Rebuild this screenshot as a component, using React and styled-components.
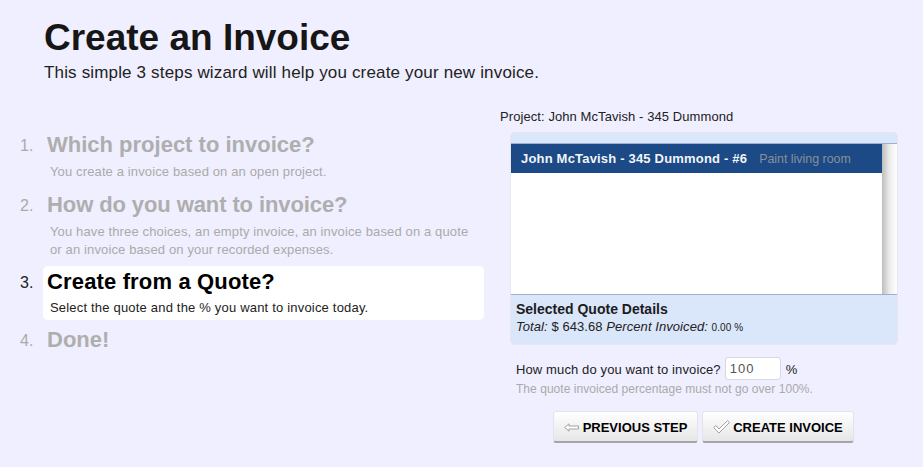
import React from "react";
import styled, { createGlobalStyle } from "styled-components";

const Global = createGlobalStyle`
  html, body { margin: 0; padding: 0; background: #f0efff; }
  body { font-family: "Liberation Sans", Arial, sans-serif; color: #222; width: 923px; height: 467px; overflow: hidden; }
`;
const Page = styled.div`
  width: 923px; height: 467px; box-sizing: border-box; overflow: hidden; background: #f0efff;
`;
const Header = styled.header`padding: 16px 0 0 44px; height: 88px; box-sizing: border-box;`;
const Title = styled.h1`margin: 0; font-size: 37px; line-height: 44px; font-weight: bold; color: #161616;`;
const Subtitle = styled.p`margin: 3px 0 0; font-size: 17px; line-height: 20px; letter-spacing: .16px; color: #222;`;
const Columns = styled.div`display: flex; height: 379px;`;
const Steps = styled.ol`list-style: none; margin: 0; padding: 42px 0 0 0; width: 500px; box-sizing: border-box;`;
const Step = styled.li`
  display: flex; align-items: flex-start; margin-bottom: ${p => p.$gap}px;
`;
const Num = styled.span`
  width: 43px; box-sizing: border-box; padding: ${p => p.$active ? 7 : 6}px 0 0 20px; font-size: 16px; line-height: 20px; flex: none;
  color: ${p => p.$active ? "#222" : "#aaa"};
`;
const StepBody = styled.div`
  width: 441px; box-sizing: border-box; padding: ${p => p.$active ? 1 : 0}px 4px 3px 4px; border-radius: 5px;
  background: ${p => p.$active ? "#fff" : "transparent"};
`;
const StepTitle = styled.h2`
  margin: 0; font-size: 22px; line-height: 30px; font-weight: bold; color: ${p => p.$active ? "#000" : "#aeaeae"};
  letter-spacing: ${p => p.$spacing || 0}px;
`;
const StepText = styled.p`
  margin: ${p => p.$active ? 2 : 3}px 0 0 3px; font-size: 13px; line-height: 18px;
  letter-spacing: ${p => p.$active ? ".19px" : ".13px"}; color: ${p => p.$active ? "#222" : "#aaa"};
`;
const Right = styled.section`width: 423px; padding-top: 20px; box-sizing: border-box;`;
const ProjectLabel = styled.div`font-size: 13px; line-height: 18px; letter-spacing: .08px; color: #222;`;
const Panel = styled.div`
  margin: 6px 0 0 10px; width: 388px; height: 213px; box-sizing: border-box; border: 1px solid #e6e6ee; border-radius: 5px;
  background: #dae6fa; overflow: hidden; display: flex; flex-direction: column;
`;
const ListBox = styled.div`
  margin-top: 10px; height: 152px; flex: none; border-top: 1px solid #9fb0cf; border-bottom: 1px solid #9fb0cf;
  background: #fff; display: flex; box-sizing: border-box;
`;
const ListInner = styled.div`flex: 1;`;
const Scroll = styled.div`
  width: 15px; flex: none; background: linear-gradient(90deg, #bdbdbd 0%, #ececec 50%, #fff 100%);
`;
const Row = styled.div`
  height: 29px; background: #1b4a86; display: flex; align-items: center; padding-left: 10px; gap: 12px; font-size: 13px;
`;
const RowName = styled.b`color: #f2f4f8; letter-spacing: .19px;`;
const RowNote = styled.span`color: #8a8f98; font-size: 12.4px;`;
const Details = styled.div`padding: 6px 5px 0; `;
const DetailsTitle = styled.div`font-size: 14px; line-height: 16px; font-weight: bold; color: #1c1c1c;`;
const DetailsLine = styled.div`margin-top: 1px; font-size: 13px; line-height: 17px; letter-spacing: .07px; color: #222; em { font-style: italic; } small { font-size: 10px; }`;
const Form = styled.div`margin: 12px 0 0 16px;`;
const AmountRow = styled.label`display: flex; align-items: center; font-size: 13px; letter-spacing: .12px; color: #222; height: 23px; padding-top: 2px; box-sizing: border-box;`;
const AmountInput = styled.input`
  width: 56px; height: 23px; box-sizing: border-box; margin: -2px 5px 0 4px; padding: 0 4px; border: 1px solid #d8d8e2; border-radius: 3px;
  background: #fff; font: 13px "Liberation Sans", Arial, sans-serif; color: #555; letter-spacing: 1px;
`;
const Hint = styled.div`margin-top: 1px; font-size: 12px; line-height: 16px; letter-spacing: .04px; color: #aaa;`;
const Buttons = styled.div`display: flex; gap: 4px; margin: 14px 0 0 37px;`;
const Button = styled.button`
  height: 32px; width: ${p => p.$w}px; box-sizing: border-box; padding: 1px 0 0; display: flex; align-items: center; justify-content: center; gap: ${p => p.$gap}px;
  border: 1px solid #e4e4e8; border-bottom: 2px solid #a5a5a8; border-radius: 3px;
  background: linear-gradient(#fff, #e6e6e6);
  font: bold 13px "Liberation Sans", Arial, sans-serif; color: #000;
`;

const ArrowIcon = () => (
  <svg width="15" height="9" viewBox="0 0 15 9" fill="#fff" stroke="#a0a0a0" strokeWidth="1">
    <path d="M.7 4.5 5 .8v2.2h9.5v3H5v2.2z" />
  </svg>
);
const CheckIcon = () => (
  <svg width="17" height="14" viewBox="0 0 17 14" fill="#fff" stroke="#a0a0a0" strokeWidth="1">
    <path d="M.7 7.5 3 5.5 6 9 14.5.7 16.5 2.5 6 13z" />
  </svg>
);

export default function App() {
  return (
    <Page>
      <Global />
      <Header>
        <Title>Create an Invoice</Title>
        <Subtitle>This simple 3 steps wizard will help you create your new invoice.</Subtitle>
      </Header>
      <Columns>
        <Steps>
          <Step $gap={6}>
            <Num>1.</Num>
            <StepBody>
              <StepTitle>Which project to invoice?</StepTitle>
              <StepText>You create a invoice based on an open project.</StepText>
            </StepBody>
          </Step>
          <Step $gap={4}>
            <Num>2.</Num>
            <StepBody>
              <StepTitle $spacing={-0.1}>How do you want to invoice?</StepTitle>
              <StepText>You have three choices, an empty invoice, an invoice based on a quote<br />or an invoice based on your recorded expenses.</StepText>
            </StepBody>
          </Step>
          <Step $gap={5}>
            <Num $active>3.</Num>
            <StepBody $active>
              <StepTitle $active $spacing={0.15}>Create from a Quote?</StepTitle>
              <StepText $active>Select the quote and the % you want to invoice today.</StepText>
            </StepBody>
          </Step>
          <Step $gap={0}>
            <Num>4.</Num>
            <StepBody><StepTitle>Done!</StepTitle></StepBody>
          </Step>
        </Steps>
        <Right>
          <ProjectLabel>Project: John McTavish - 345 Dummond</ProjectLabel>
          <Panel>
            <ListBox>
              <ListInner>
                <Row>
                  <RowName>John McTavish - 345 Dummond - #6</RowName>
                  <RowNote>Paint living room</RowNote>
                </Row>
              </ListInner>
              <Scroll />
            </ListBox>
            <Details>
              <DetailsTitle>Selected Quote Details</DetailsTitle>
              <DetailsLine><em>Total:</em> $ 643.68 <em>Percent Invoiced:</em> <small>0.00 %</small></DetailsLine>
            </Details>
          </Panel>
          <Form>
            <AmountRow>
              How much do you want to invoice?
              <AmountInput defaultValue="100" />
              %
            </AmountRow>
            <Hint>The quote invoiced percentage must not go over 100%.</Hint>
            <Buttons>
              <Button $w={145} $gap={4}><ArrowIcon />PREVIOUS STEP</Button>
              <Button $w={152} $gap={3}><CheckIcon />CREATE INVOICE</Button>
            </Buttons>
          </Form>
        </Right>
      </Columns>
    </Page>
  );
}
